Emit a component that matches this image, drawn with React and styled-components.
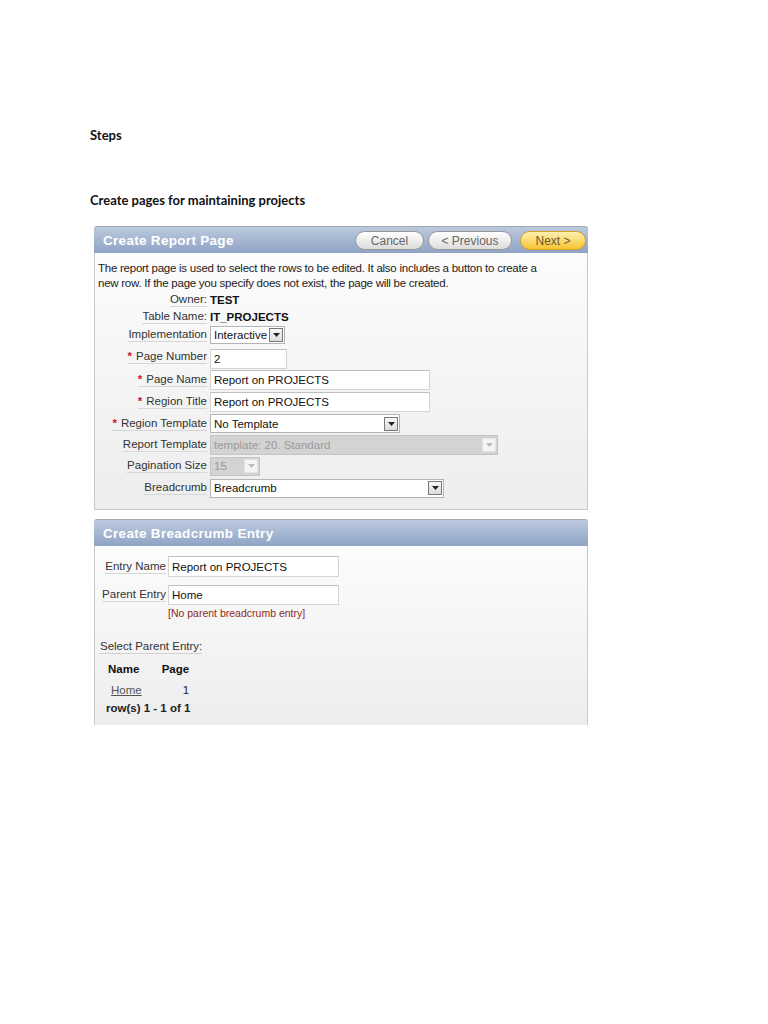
import styled, { createGlobalStyle } from "styled-components";

const Global = createGlobalStyle`
  body {
    margin: 0;
    background: #fff;
  }
`;

export default function App() {
  return (
    <Page>
      <Global />
      <DocHeading>Steps</DocHeading>
      <DocHeading $top={49}>Create pages for maintaining projects</DocHeading>

      <Panel $top={18}>
        <PanelHead>
          <h2>Create Report Page</h2>
          <Buttons>
            <Btn $w={69}>Cancel</Btn>
            <Btn $w={84}>&lt; Previous</Btn>
            <Btn $w={66} $primary>Next &gt;</Btn>
          </Buttons>
        </PanelHead>
        <PanelBody $pt={8} $pb={10}>
          <Intro>
            The report page is used to select the rows to be edited. It also
            includes a button to create a new row. If the page you specify does
            not exist, the page will be created.
          </Intro>
          <Row $h={17}>
            <Label>Owner:</Label>
            <Value>TEST</Value>
          </Row>
          <Row $h={17}>
            <Label>Table Name:</Label>
            <Value>IT_PROJECTS</Value>
          </Row>
          <Row $h={19}>
            <Label>Implementation</Label>
            <Select w={75} h={18} value="Interactive" />
          </Row>
          <Row $h={25} $end>
            <Label req>Page Number</Label>
            <Input $w={77}>2</Input>
          </Row>
          <Row $h={22}>
            <Label req>Page Name</Label>
            <Input $w={220}>Report on PROJECTS</Input>
          </Row>
          <Row $h={22}>
            <Label req>Region Title</Label>
            <Input $w={220}>Report on PROJECTS</Input>
          </Row>
          <Row $h={21}>
            <Label req>Region Template</Label>
            <Select w={190} h={19} value="No Template" />
          </Row>
          <Row $h={21}>
            <Label>Report Template</Label>
            <Select w={288} h={20} value="template: 20. Standard" disabled />
          </Row>
          <Row $h={22}>
            <Label>Pagination Size</Label>
            <Select w={50} h={19} value="15" disabled />
          </Row>
          <Row $h={22}>
            <Label>Breadcrumb</Label>
            <Select w={234} h={19} value="Breadcrumb" />
          </Row>
        </PanelBody>
      </Panel>

      <Panel $top={9}>
        <PanelHead>
          <h2>Create Breadcrumb Entry</h2>
        </PanelHead>
        <PanelBody $pt={7} $pb={10} $open>
          <EntryRow $mt={3}>
            <EntryLabel>
              <LabelText>Entry Name</LabelText>
            </EntryLabel>
            <Input $w={171} $h={21}>Report on PROJECTS</Input>
          </EntryRow>
          <EntryRow $mt={8}>
            <EntryLabel>
              <LabelText>Parent Entry</LabelText>
            </EntryLabel>
            <Input $w={171} $h={20}>Home</Input>
          </EntryRow>
          <Hint>[No parent breadcrumb entry]</Hint>
          <SubLabel>Select Parent Entry:</SubLabel>
          <Report>
            <thead>
              <tr>
                <th>Name</th>
                <th>Page</th>
              </tr>
            </thead>
            <tbody>
              <tr>
                <td>
                  <a href="#home">Home</a>
                </td>
                <td>1</td>
              </tr>
            </tbody>
          </Report>
          <Pager>row(s) 1 - 1 of 1</Pager>
        </PanelBody>
      </Panel>
    </Page>
  );
}

function Label({ req, children }) {
  return (
    <LabelCell>
      <LabelText>
        {req && <Star>*</Star>}
        {children}
      </LabelText>
    </LabelCell>
  );
}

function Select({ w, h, value, disabled }) {
  return (
    <SelectBox style={{ width: w, height: h }} $disabled={disabled}>
      <span>{value}</span>
      <Arrow $disabled={disabled}>
        <svg width="7" height="4" viewBox="0 0 7 4">
          <path d="M0 0h7L3.5 4z" fill={disabled ? "#bbb" : "#222"} />
        </svg>
      </Arrow>
    </SelectBox>
  );
}

const Page = styled.div`
  padding: 127px 0 0 90px;
  min-height: 1024px;
  box-sizing: border-box;
`;

const DocHeading = styled.div`
  margin-top: ${(p) => p.$top || 0}px;
  font-family: Lato, "Liberation Sans", sans-serif;
  font-weight: 700;
  font-size: 13px;
  line-height: 16px;
  color: #111;
`;

const Panel = styled.div`
  margin: ${(p) => p.$top}px 0 0 4px;
  width: 494px;
  font-family: "Liberation Sans", Arial, sans-serif;
`;

const PanelHead = styled.div`
  height: 27px;
  box-sizing: border-box;
  display: flex;
  align-items: center;
  justify-content: space-between;
  padding: 0 2px 0 9px;
  border-top: 1px solid #a4a9b2;
  border-radius: 3px 3px 0 0;
  background: linear-gradient(#bccadf, #8fa3c4);
  h2 {
    margin: 0;
    font-size: 13.5px;
    font-weight: 700;
    color: #fff;
    letter-spacing: 0.3px;
  }
`;

const Buttons = styled.div`
  display: flex;
  gap: 4px;
  margin-top: 1px;
`;

const Btn = styled.button`
  width: ${(p) => p.$w}px;
  height: 19px;
  padding: 0;
  border-radius: 10px;
  border: 1px solid ${(p) => (p.$primary ? "#d5a11f" : "#9a9a9a")};
  background: ${(p) =>
    p.$primary
      ? "linear-gradient(#fff0b0, #f7c434)"
      : "linear-gradient(#ffffff, #dcdcdc)"};
  font-family: "Liberation Sans", Arial, sans-serif;
  font-size: 12px;
  color: ${(p) => (p.$primary ? "#6a5a30" : "#666")};
  &:last-child {
    margin-left: 4px;
  }
`;

const PanelBody = styled.div`
  padding: ${(p) => p.$pt}px 0 ${(p) => p.$pb}px 0;
  border: 1px solid #c9c9c9;
  border-top: none;
  border-bottom: ${(p) => (p.$open ? "none" : "1px solid #c9c9c9")};
  background: linear-gradient(#fcfcfc, #ededed);
  font-size: 11.5px;
  color: #222;
`;

const Intro = styled.p`
  margin: 0 0 0 3px;
  line-height: 15px;
  width: 450px;
  letter-spacing: -0.25px;
`;

const Row = styled.div`
  height: ${(p) => p.$h}px;
  display: flex;
  align-items: ${(p) => (p.$end ? "flex-end" : "center")};
  box-sizing: border-box;
`;

const LabelCell = styled.div`
  width: 112px;
  margin-right: 3px;
  text-align: right;
  align-self: center;
`;

const LabelText = styled.span`
  display: inline-block;
  border-bottom: 1px solid #d6d6d6;
  line-height: 13px;
  color: #333;
  white-space: nowrap;
`;

const Star = styled.span`
  color: #c8102e;
  font-weight: 700;
  margin-right: 4px;
`;

const Value = styled.span`
  font-weight: 700;
  color: #111;
`;

const Input = styled.div`
  width: ${(p) => p.$w}px;
  height: ${(p) => p.$h || 20}px;
  box-sizing: border-box;
  padding-left: 3px;
  display: flex;
  align-items: center;
  background: #fff;
  border: 1px solid #d4d4d4;
  border-top-color: #bfbfbf;
  color: #111;
  white-space: nowrap;
`;

const SelectBox = styled.div`
  box-sizing: border-box;
  display: flex;
  align-items: center;
  justify-content: space-between;
  padding: 0 1px 0 3px;
  background: ${(p) => (p.$disabled ? "#d3d3d3" : "#fff")};
  border: 1px solid ${(p) => (p.$disabled ? "#c4c4c4" : "#b4b4b4")};
  color: ${(p) => (p.$disabled ? "#9a9a9a" : "#111")};
  white-space: nowrap;
`;

const Arrow = styled.span`
  width: 14px;
  height: 14px;
  box-sizing: border-box;
  display: flex;
  align-items: center;
  justify-content: center;
  border: 1px solid ${(p) => (p.$disabled ? "#e2e2e2" : "#777")};
  background: ${(p) =>
    p.$disabled ? "#f4f4f4" : "linear-gradient(#f8f8f8, #dcdcdc)"};
`;

const EntryRow = styled.div`
  display: flex;
  align-items: center;
  margin-top: ${(p) => p.$mt}px;
`;

const EntryLabel = styled.div`
  width: 71px;
  margin-right: 2px;
  text-align: right;
`;

const Hint = styled.div`
  margin: 2px 0 0 73px;
  font-size: 10.5px;
  color: #8e2a22;
  line-height: 12px;
`;

const SubLabel = styled.div`
  display: inline-block;
  margin: 20px 0 0 5px;
  color: #333;
  border-bottom: 1px solid #d0d0d0;
  line-height: 14px;
`;

const Report = styled.table`
  margin: 8px 0 0 10px;
  border-collapse: collapse;
  th {
    font-weight: 700;
    font-size: 11.5px;
    color: #111;
    text-align: left;
    padding: 0 3px 7px 3px;
    line-height: 14px;
  }
  th + th {
    padding-left: 17px;
  }
  td {
    padding: 0 3px;
    line-height: 15px;
  }
  td + td {
    text-align: right;
  }
  a {
    color: #555;
    margin-left: 3px;
  }
`;

const Pager = styled.div`
  margin: 3px 0 0 11px;
  font-weight: 700;
  color: #222;
  line-height: 14px;
`;
